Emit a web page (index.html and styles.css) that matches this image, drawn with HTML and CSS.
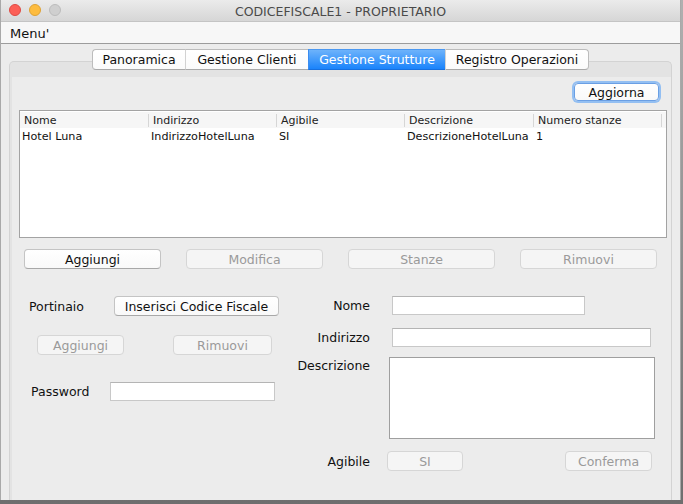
FILE: index.html
```html
<!DOCTYPE html>
<html>
<head>
<meta charset="utf-8">
<link rel="stylesheet" href="styles.css">
</head>
<body>
<div class="window">
  <div class="titlebar">
    <div class="lights">
      <span class="light red"></span>
      <span class="light yellow"></span>
      <span class="light gray"></span>
    </div>
    <div class="title">CODICEFISCALE1 - PROPRIETARIO</div>
    <div></div>
  </div>
  <div class="menubar"><span class="menu">Menu'</span></div>
  <div class="content">
    <div class="tabs">
      <div class="tab t1">Panoramica</div>
      <div class="tab t2">Gestione Clienti</div>
      <div class="tab t3 active">Gestione Strutture</div>
      <div class="tab t4">Registro Operazioni</div>
    </div>
    <div class="pane">
      <div class="pane-body">
        <div class="toolbar">
          <div class="btn focus">Aggiorna</div>
        </div>
        <div class="table">
          <div class="thead">
            <div class="th">Nome</div>
            <div class="th">Indirizzo</div>
            <div class="th">Agibile</div>
            <div class="th">Descrizione</div>
            <div class="th">Numero stanze</div>
            <div class="th last"></div>
          </div>
          <div class="trow">
            <div class="td">Hotel Luna</div>
            <div class="td">IndirizzoHotelLuna</div>
            <div class="td">SI</div>
            <div class="td">DescrizioneHotelLuna</div>
            <div class="td">1</div>
            <div class="td"></div>
          </div>
        </div>
        <div class="actions">
          <div class="btn w137">Aggiungi</div>
          <div class="btn disabled w137">Modifica</div>
          <div class="btn disabled w147">Stanze</div>
          <div class="btn disabled w137">Rimuovi</div>
        </div>
        <div class="form">
          <div class="col-left">
            <div class="row r-port">
              <span class="lbl lbl-port">Portinaio</span>
              <div class="btn w165">Inserisci Codice Fiscale</div>
            </div>
            <div class="row r-pbtn">
              <div class="btn disabled w87">Aggiungi</div>
              <div class="btn disabled w99">Rimuovi</div>
            </div>
            <div class="row r-pass">
              <span class="lbl lbl-pass">Password</span>
              <div class="field w165"></div>
            </div>
          </div>
          <div class="col-right">
            <div class="row r-nome">
              <span class="lbl rlbl">Nome</span>
              <div class="field f-nome"></div>
            </div>
            <div class="row r-ind">
              <span class="lbl rlbl">Indirizzo</span>
              <div class="field f-ind"></div>
            </div>
            <div class="row r-desc">
              <span class="lbl rlbl">Descrizione</span>
              <div class="area"></div>
            </div>
            <div class="row r-agi">
              <span class="lbl rlbl">Agibile</span>
              <div class="btn disabled b-si">SI</div>
              <div class="btn disabled b-conf">Conferma</div>
            </div>
          </div>
        </div>
      </div>
    </div>
  </div>
</div>
</body>
</html>
```
FILE: styles.css
```css
* { box-sizing: border-box; }
html, body { margin: 0; padding: 0; }
body {
  width: 683px;
  height: 504px;
  overflow: hidden;
  background: linear-gradient(#b0b0b0, #6e6e6e);
  font-family: "DejaVu Sans", sans-serif;
  font-size: 12.5px;
  color: #1a1a1a;
}
.window {
  width: 681px;
  height: 500px;
  display: flex;
  flex-direction: column;
  background: #ececec;
  border-left: 1px solid #a9a9a9;
  border-right: 1px solid #a9a9a9;
}
.titlebar {
  height: 22px;
  display: grid;
  grid-template-columns: 1fr auto 1fr;
  align-items: center;
  background: linear-gradient(#ebebeb, #d6d6d6);
  border-bottom: 1px solid #c4c4c4;
}
.lights { display: flex; gap: 8px; padding-left: 8px; padding-top: 4px; align-self: start; }
.light { width: 12px; height: 12px; border-radius: 50%; display: block; }
.red { background: #fc5f57; border: 1px solid #de4a43; }
.yellow { background: #fdbc3f; border: 1px solid #dea234; }
.gray { background: #cfcfcf; border: 1px solid #bcbcbc; }
.title { color: #4a4a4a; font-size: 12.5px; padding-top: 1px; }
.menubar {
  height: 22px;
  background: #f7f7f7;
  border-bottom: 1px solid #9c9c9c;
  display: flex;
  align-items: center;
  padding-left: 9px;
}
.menu { font-size: 13px; color: #111; padding-top: 1px; }
.content { flex: 1; display: flex; flex-direction: column; }
.tabs {
  display: flex;
  justify-content: center;
  margin-top: 5px;
  height: 21px;
  margin-bottom: -9px;
  position: relative;
  z-index: 1;
}
.tab {
  height: 21px;
  display: flex;
  align-items: center;
  justify-content: center;
  background: linear-gradient(#ffffff, #fbfbfb);
  border-top: 1px solid #bcbcbc;
  border-bottom: 1px solid #a9a9a9;
  border-left: 1px solid #d2d2d2;
  color: #111;
}
.t1 { width: 93px; border-left: 1px solid #bcbcbc; border-radius: 4px 0 0 4px; }
.t2 { width: 123px; }
.t3 { width: 137px; }
.t4 { width: 144px; border-right: 1px solid #bcbcbc; border-radius: 0 4px 4px 0; }
.tab.active {
  background: linear-gradient(#6db3fb, #1a83fb);
  color: #fff;
  border-top-color: #4c98f0;
  border-bottom-color: #1670e0;
  border-left-color: #3b8cf0;
}
.pane {
  flex: 1;
  margin: 0 8px;
  border: 1px solid #d3d3d3;
  border-bottom: none;
  border-radius: 5px 5px 0 0;
  background: #e3e3e3;
  padding: 15px 2px 0 2px;
  display: flex;
}
.pane-body {
  flex: 1;
  background: #ececec;
  display: flex;
  flex-direction: column;
}
.toolbar {
  display: flex;
  justify-content: flex-end;
  padding: 6px 12px 0 0;
}
.btn {
  height: 20px;
  display: flex;
  align-items: center;
  justify-content: center;
  background: linear-gradient(#ffffff, #f9f9f9);
  border: 1px solid #c4c4c4;
  border-bottom-color: #a8a8a8;
  border-radius: 4px;
  color: #111;
  white-space: nowrap;
}
.btn.focus {
  width: 85px;
  height: 18px;
  border-color: #6a9fe4;
  box-shadow: 0 0 0 2px #93bff2;
}
.btn.disabled {
  background: #f5f5f5;
  border-color: #d6d6d6;
  color: #9a9a9a;
}
.table {
  margin: 9px 4px 0 7px;
  height: 128px;
  border: 1px solid #a3a3a3;
  background: #fff;
}
.thead, .trow {
  display: grid;
  grid-template-columns: 129px 128px 128px 129px 128px 1fr;
}
.thead {
  height: 16px;
  background: #f6f6f6;
  margin-top: 1px;
  font-size: 11px;
  color: #222;
}
.th {
  display: flex;
  align-items: center;
  padding-left: 4px;
  border-right: 1px solid #d6d6d6;
  margin: 2px 0 1px;
  line-height: 13px;
}
.th.last { border-right: none; }
.trow { height: 17px; font-size: 11.2px; color: #111; }
.td { display: flex; align-items: center; padding-left: 2px; white-space: nowrap; }
.actions {
  display: flex;
  gap: 25px;
  margin-top: 11px;
  padding-left: 12px;
}
.w137 { width: 137px; }
.w147 { width: 147px; }
.w165 { width: 165px; }
.w87 { width: 87px; }
.w99 { width: 99px; }
.form { display: flex; margin-top: 27px; }
.col-left { width: 278px; display: flex; flex-direction: column; }
.col-right { flex: 1; display: flex; flex-direction: column; }
.row { display: flex; align-items: center; }
.lbl { white-space: nowrap; color: #111; }
.lbl-port { margin-left: 17px; width: 85px; }
.r-pbtn { margin-top: 19px; margin-left: 25px; gap: 49px; }
.r-pass { margin-top: 27px; }
.lbl-pass { margin-left: 19px; width: 79px; }
.field {
  height: 19px;
  background: #fff;
  border: 1px solid #c8c8c8;
  border-top-color: #b4b4b4;
}
.rlbl { width: 80px; text-align: right; }
.r-nome .field, .r-ind .field { margin-left: 22px; }
.f-nome { width: 193px; }
.r-ind { margin-top: 13px; }
.f-ind { width: 259px; }
.r-desc { margin-top: 10px; align-items: flex-start; }
.r-desc .rlbl { margin-top: 1px; }
.area {
  margin-left: 19px;
  width: 266px;
  height: 82px;
  background: #fff;
  border: 1px solid #9f9f9f;
}
.r-agi { margin-top: 12px; }
.b-si { margin-left: 17px; width: 76px; }
.b-conf { margin-left: 102px; width: 87px; }
```
